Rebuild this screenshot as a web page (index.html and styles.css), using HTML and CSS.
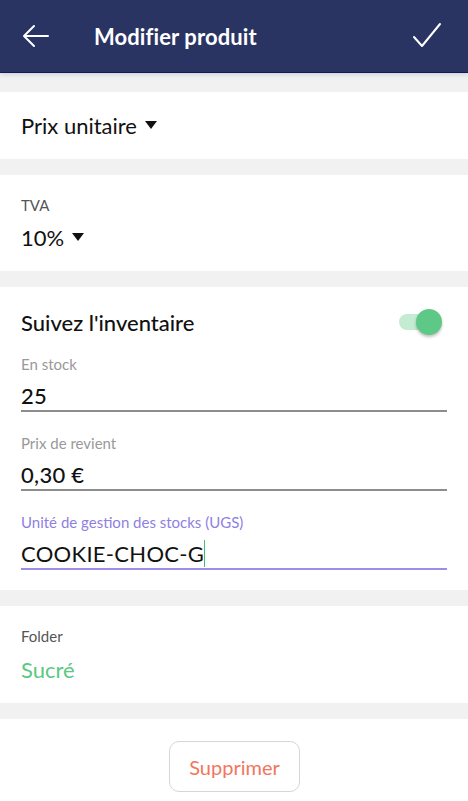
FILE: index.html
```html
<!DOCTYPE html>
<html lang="fr">
<head>
  <meta charset="UTF-8">
  <title>Modifier produit</title>
  <link rel="stylesheet" href="styles.css">
</head>
<body>
  <header class="topbar">
    <button class="icon-btn" aria-label="Retour">
      <svg width="28" height="28" viewBox="0 0 28 28" fill="none" stroke="#fff" stroke-width="2" stroke-linecap="round" stroke-linejoin="round">
        <path d="M2 14h24M12 4L2 14l10 10"/>
      </svg>
    </button>
    <h1 class="title">Modifier produit</h1>
    <button class="icon-btn check" aria-label="Valider">
      <svg width="30" height="28" viewBox="0 0 30 28" fill="none" stroke="#fff" stroke-width="2" stroke-linecap="round" stroke-linejoin="round">
        <path d="M2 15l8 9L28 2"/>
      </svg>
    </button>
  </header>

  <main class="content">
    <section class="card card-price">
      <div class="dropdown">Prix unitaire <span class="caret"></span></div>
    </section>

    <section class="card card-tva">
      <div class="label">TVA</div>
      <div class="dropdown tva-value">10% <span class="caret"></span></div>
    </section>

    <section class="card card-stock">
      <div class="switch-row">
        <span class="switch-label">Suivez l'inventaire</span>
        <span class="switch on"><span class="knob"></span></span>
      </div>

      <div class="field">
        <div class="field-label">En stock</div>
        <div class="field-value">25</div>
      </div>
      <div class="field">
        <div class="field-label">Prix de revient</div>
        <div class="field-value">0,30 €</div>
      </div>
      <div class="field focused">
        <div class="field-label">Unité de gestion des stocks (UGS)</div>
        <div class="field-value">COOKIE-CHOC-G<span class="cursor"></span></div>
      </div>
    </section>

    <section class="card card-folder">
      <div class="label">Folder</div>
      <div class="folder-value">Sucré</div>
    </section>

    <div class="footer">
      <button class="delete-btn">Supprimer</button>
    </div>
  </main>
</body>
</html>
```

FILE: styles.css
```css
html, body {
  margin: 0;
  padding: 0;
}
body {
  font-family: Lato, "Open Sans", Arial, sans-serif;
  background: #f1f1f1;
  color: #111;
  width: 468px;
  height: 801px;
  overflow: hidden;
}
.topbar {
  height: 72px;
  background: #2a3463;
  border-bottom: 1px solid #15185e;
  display: flex;
  align-items: center;
  padding: 0 20px 0 22px;
  box-shadow: 0 2px 4px rgba(0,0,0,0.12);
}
.icon-btn {
  background: none;
  border: 0;
  padding: 0;
  display: flex;
}
.title {
  margin: 0 0 0 44px;
  flex: 1;
  color: #fff;
  font-size: 22px;
  font-weight: 700;
  letter-spacing: 0.1px;
}
.check {
  margin-right: 6px;
}
.content {
  padding-top: 19px;
}
.card {
  background: #fff;
  padding: 0 21px;
  margin-bottom: 16px;
}
.card-price {
  height: 67px;
  display: flex;
  align-items: center;
}
.dropdown {
  font-size: 22px;
  line-height: 28px;
  display: flex;
  align-items: center;
  gap: 8px;
}
.caret {
  width: 0;
  height: 0;
  border-left: 6px solid transparent;
  border-right: 6px solid transparent;
  border-top: 8px solid #111;
  margin-top: -2px;
}
.card-tva {
  height: 96px;
  padding-top: 21px;
  box-sizing: border-box;
}
.label {
  font-size: 15px;
  line-height: 18px;
  color: #555;
}
.tva-value {
  margin-top: 10px;
}
.card-stock {
  height: 303px;
  box-sizing: border-box;
  padding-top: 21px;
}
.switch-row {
  display: flex;
  align-items: center;
  justify-content: space-between;
  height: 28px;
}
.switch-label {
  font-size: 22px;
  font-weight: 500;
}
.switch {
  position: relative;
  width: 34px;
  height: 16px;
  border-radius: 8px;
  background: #c3ecd2;
  margin-right: 14px;
}
.switch .knob {
  position: absolute;
  right: -9px;
  top: -5px;
  width: 26px;
  height: 26px;
  border-radius: 50%;
  background: #5ec887;
  box-shadow: 0 2px 3px rgba(0,0,0,0.25);
}
.field {
  margin-top: 22px;
  border-bottom: 2px solid #8d8d8d;
}
.switch-row + .field {
  margin-top: 19px;
}
.field-label {
  font-size: 15px;
  color: #999;
  line-height: 18px;
}
.field-value {
  font-size: 22px;
  font-weight: 500;
  line-height: 28px;
  margin-top: 9px;
  letter-spacing: 0.3px;
}
.field.focused {
  border-bottom-color: #9d8ce8;
}
.field.focused .field-label {
  color: #8f7fe2;
}
.field.focused .field-value {
  font-weight: 400;
}
.cursor {
  display: inline-block;
  width: 1px;
  height: 27px;
  background: #3fbf6f;
  vertical-align: -5px;
}
.card-folder {
  height: 97px;
  box-sizing: border-box;
  padding-top: 21px;
}
.folder-value {
  font-size: 22px;
  line-height: 28px;
  color: #5bc883;
  margin-top: 11px;
}
.footer {
  background: #fff;
  height: 82px;
  padding-top: 22px;
  display: flex;
  justify-content: center;
}
.delete-btn {
  width: 131px;
  height: 51px;
  background: #fff;
  border: 1.5px solid #d6d6d6;
  border-radius: 10px;
  font-family: inherit;
  font-size: 20px;
  color: #f1765d;
  margin-left: 1px;
}
```
